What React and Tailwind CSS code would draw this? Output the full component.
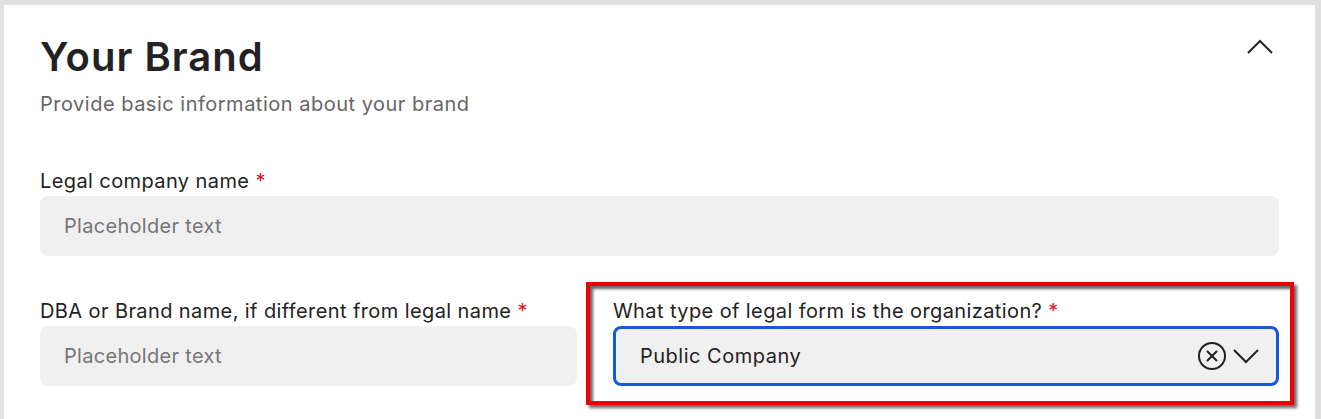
import React from "react";

const font = { fontFamily: "Inter, 'Noto Sans', sans-serif" };

const Field = ({ label, children }) => (
  <div>
    <label className="block text-[20px] leading-6 tracking-[0.4px] text-[#222] mb-[3px]">
      {label} <span className="text-[#d7182a]">*</span>
    </label>
    {children}
  </div>
);

const Placeholder = () => (
  <div className="h-[60px] rounded-lg bg-[#f0f0f0] px-6 flex items-center text-[20px] tracking-[0.3px] text-[#767676]">
    Placeholder text
  </div>
);

export default function App() {
  return (
    <div style={font} className="h-[419px] overflow-hidden bg-[#e0e0e0] pl-1 pt-[5px] pr-[6px]">
      <div className="bg-white h-[500px] px-9 pt-7">
        <div className="flex justify-between items-start">
          <div>
            <h1 className="text-[40px] leading-[48px] font-semibold tracking-[1px] text-[#222]">Your Brand</h1>
            <p className="mt-[9px] text-[20px] leading-7 tracking-[0.5px] text-[#666]">
              Provide basic information about your brand
            </p>
          </div>
          <button className="mt-[6px] mr-[6px]">
            <svg width="26" height="15" viewBox="0 0 26 15" fill="none">
              <path d="M1 14 L13 2 L25 14" stroke="#2a2a2a" strokeWidth="2.2" />
            </svg>
          </button>
        </div>

        <div className="mt-[51px]">
          <Field label="Legal company name">
            <Placeholder />
          </Field>
        </div>

        <div className="mt-[43px] grid grid-cols-[537fr_666fr] gap-9">
          <Field label="DBA or Brand name, if different from legal name">
            <Placeholder />
          </Field>
          <div className="relative">
            <Field label="What type of legal form is the organization?">
              <div className="h-[60px] rounded-lg bg-[#f0f0f0] border-[3px] border-[#1459db] pl-6 pr-[17px] flex items-center text-[20px] tracking-[0.5px] text-[#222]">
                <span className="flex-1">Public Company</span>
                <svg width="30" height="30" viewBox="0 0 30 30" fill="none" className="mr-[6px]">
                  <circle cx="15" cy="15" r="13" stroke="#222" strokeWidth="2" />
                  <path d="M10 10 L20 20 M20 10 L10 20" stroke="#222" strokeWidth="2" />
                </svg>
                <svg width="26" height="15" viewBox="0 0 26 15" fill="none">
                  <path d="M1 1 L13 13 L25 1" stroke="#222" strokeWidth="2" />
                </svg>
              </div>
            </Field>
            <div className="absolute -left-[27px] -top-[17px] -right-[15px] -bottom-[19px] border-4 border-[#ee0000] shadow-[3px_3px_3px_rgba(0,0,0,0.6),inset_3px_3px_3px_rgba(0,0,0,0.6)] pointer-events-none" />
          </div>
        </div>
      </div>
    </div>
  );
}
